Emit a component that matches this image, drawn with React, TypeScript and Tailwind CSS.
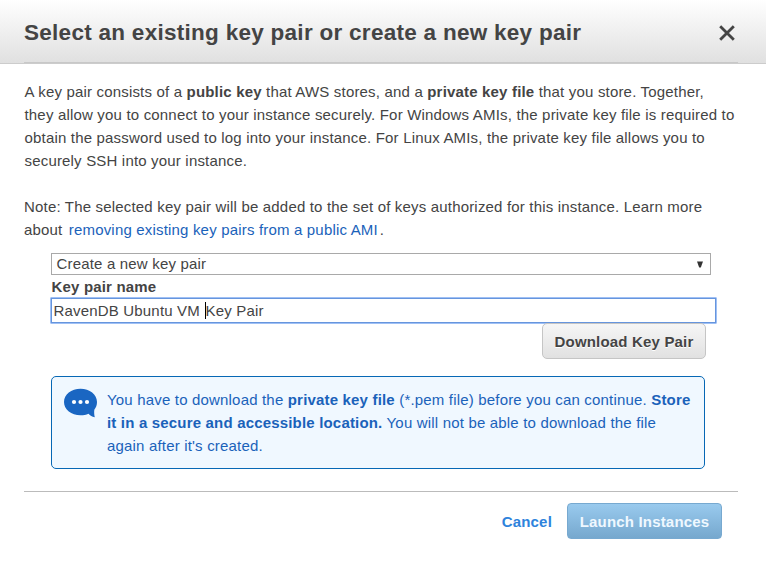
import type { ReactNode } from "react";

function Line({ children }: { children: ReactNode }) {
  return <span className="block h-[23px] whitespace-nowrap">{children}</span>;
}

export default function App() {
  return (
    <div className="h-[561px] w-[766px] overflow-hidden bg-white font-['Liberation_Sans',Arial,sans-serif] text-[15px] leading-[23px] tracking-[0.18px] text-[#444]">
      <header className="h-16 border-b border-[#ccc] bg-linear-to-b from-white to-[#e0e0e0] px-6 pr-7">
        <div className="flex h-[63px] w-[714px] items-center justify-between border-b border-[#c8c8c8] pr-[3px]">
          <h1 className="mt-[3px] text-[22.5px] leading-[28px] font-bold tracking-[0.28px] whitespace-nowrap">Select an existing key pair or create a new key pair</h1>
          <button aria-label="Close" className="mt-[4px]">
            <svg width="16" height="16" viewBox="0 0 16 16" fill="none" stroke="#444" strokeWidth="2.8">
              <path d="M1.200 1.200 14.800 14.800M14.800 1.200 1.200 14.800" />
            </svg>
          </button>
        </div>
      </header>
      <main className="px-6 pt-4">
        <p className="pl-[0.5px]">
          <Line>A key pair consists of a <b>public key</b> that AWS stores, and a <b>private key file</b> that you store. Together,</Line>
          <Line>they allow you to connect to your instance securely. For Windows AMIs, the private key file is required to</Line>
          <Line>obtain the password used to log into your instance. For Linux AMIs, the private key file allows you to</Line>
          <Line>securely SSH into your instance.</Line>
        </p>
        <p className="mt-[23px]">
          <Line>Note: The selected key pair will be added to the set of keys authorized for this instance. Learn more</Line>
          <Line>about <a className="ml-[2px] mr-[2px] text-[#1a62ba]">removing existing key pairs from a public AMI</a>.</Line>
        </p>
        <section className="ml-[27px] w-[666px] pt-[12px]">
          <div className="flex h-[22px] w-[660px] items-center justify-between border border-[#a9a9a9] pr-[7px] pl-[4.5px]">
            <span className="-mt-[2px]">Create a new key pair</span>
            <svg width="6" height="7" viewBox="0 0 6 7"><path d="M0 .5h6L3.800 6.500H2.200Z" fill="#333" /></svg>
          </div>
          <label className="block h-[22px] pl-[0.5px] font-bold">Key pair name</label>
          <div className="-ml-px flex h-[27px] w-[667px] items-center rounded-[1px] border border-[#9fc0f5] bg-white">
            <div className="flex h-[25px] w-full items-center border border-[#6695dd] pl-[1.500px]">
              <span>RavenDB Ubuntu VM </span>
              <i className="ml-[5px] h-[17px] w-px bg-black" />
              <span className="-ml-[0.5px]">Key Pair</span>
            </div>
          </div>
          <div className="flex w-[655px] justify-end">
            <button className="-mt-px h-[36px] w-[164px] rounded-[5px] border border-[#c5c5c5] bg-linear-to-b from-[#f6f6f6] to-[#e1e1e1] font-bold whitespace-nowrap [text-shadow:0_1px_0_white]">Download Key Pair</button>
          </div>
          <aside className="mt-[17px] flex h-[93px] w-[654px] rounded-[5px] border border-[#0768b5] bg-[#f0f8ff] pt-[11px] pl-[12px] text-[#1a62ba]">
            <svg className="shrink-0" width="34" height="30" viewBox="0 0 34 30">
              <path d="M16.500 .8C7.300 .8 0 6.500 0 14s7.300 13.200 16.500 13.200c3 0 5.700-.5 8-1.500 1.600 1.700 3.600 2.900 6.300 3.500-.6-2.500-.8-4.900-.5-7.500C32 19.500 33 17 33 14 33 6.500 25.700 .8 16.500 .8Z" fill="#1a66c2" />
              <circle cx="10" cy="14" r="2.100" fill="white" />
              <circle cx="16.500" cy="14" r="2.100" fill="white" />
              <circle cx="23" cy="14" r="2.100" fill="white" />
            </svg>
            <p className="ml-[9px]">
              <Line>You have to download the <b>private key file</b> (*.pem file) before you can continue. <b>Store</b></Line>
              <Line><b>it in a secure and accessible location.</b> You will not be able to download the file</Line>
              <Line>again after it's created.</Line>
            </p>
          </aside>
        </section>
        <footer className="mt-[22px] mr-[4px] flex justify-end border-t border-[#bbb] pt-[11px] pr-4">
          <button className="mr-[15px] font-bold text-[#2e83dc]">Cancel</button>
          <button className="h-[36px] w-[155px] rounded-[4px] border border-[#77a9d0] bg-linear-to-b from-[#99caee] to-[#76a8ce] font-bold whitespace-nowrap text-[#eff8ff]">Launch Instances</button>
        </footer>
      </main>
    </div>
  );
}
